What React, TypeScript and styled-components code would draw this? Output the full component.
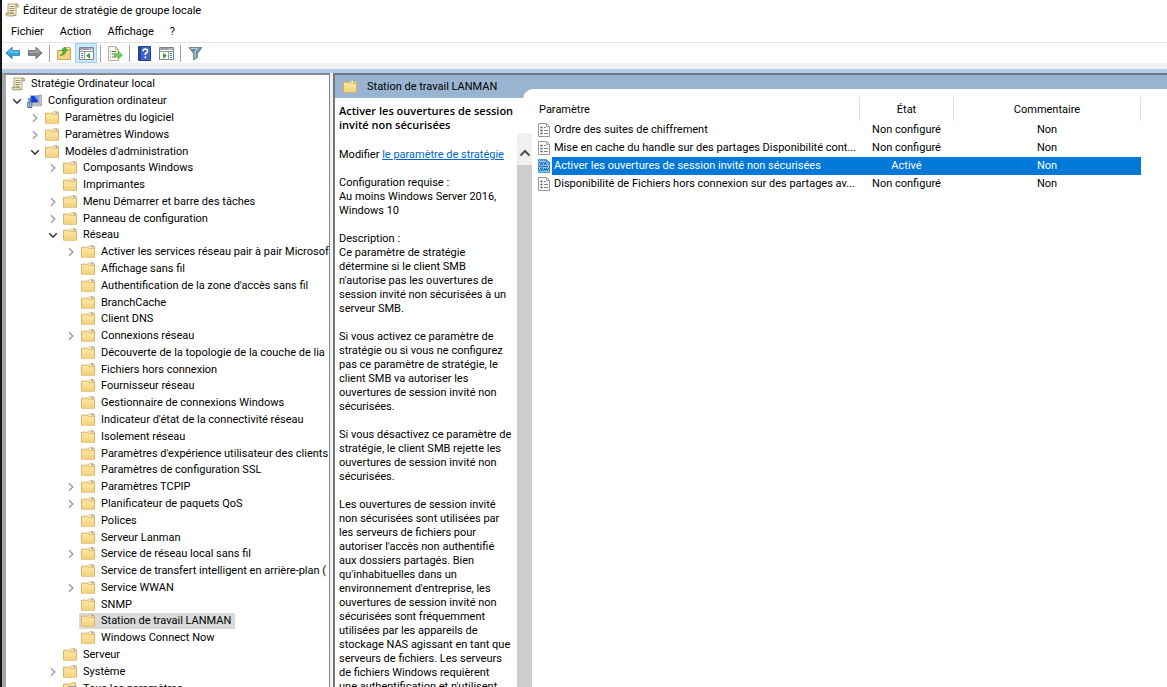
import React from "react";
import styled, { createGlobalStyle, css } from "styled-components";

const Global = createGlobalStyle`
  * { box-sizing: border-box; }
  html, body, #root { height: 100%; }
  body { margin: 0; overflow: hidden; background: #fff; color: #000;
    font-family: Roboto, "Open Sans", sans-serif; font-size: 11px; }
  button { font: inherit; color: inherit; border: 0; background: none; padding: 0; }
  svg { flex: none; }
`;

const Window = styled.div`
  height: 100vh;
  overflow: hidden;
  display: flex;
  flex-direction: column;
  border-left: 2px solid #17171a;
  background: #fff;
`;

const TitleBar = styled.header`
  display: flex;
  align-items: center;
  gap: 4px;
  height: 20px;
  flex: none;
  padding-left: 3px;
`;

const Title = styled.h1`
  margin: 0;
  font-size: 11px;
  font-weight: 400;
`;

const MenuBar = styled.nav`
  display: flex;
  align-items: center;
  gap: 16px;
  height: 22px;
  flex: none;
  padding-left: 9px;
`;

const ToolBar = styled.div`
  display: flex;
  align-items: center;
  height: 21px;
  flex: none;
  border-top: 1px solid #e4e4e4;
`;

const ToolButton = styled.button<{ $active?: boolean }>`
  width: 22px;
  height: 20px;
  display: grid;
  place-items: center;
  ${(p) => p.$active && css`background: #cce8ff; border: 1px solid #99d1ff;`}
`;

const Divider = styled.span`
  width: 1px;
  height: 17px;
  margin: 0 3px;
  background: #a0a0a0;
`;

const Frame = styled.div`
  flex: 1;
  min-height: 0;
  display: flex;
  flex-direction: column;
  border-top: 6px solid #f0f0f0;
`;

const Ribbon = styled.div`
  height: 4px;
  flex: none;
  background: #b4cce8;
`;

const Panes = styled.div`
  flex: 1;
  min-height: 0;
  display: grid;
  grid-template-columns: 328px 1fr;
  column-gap: 3px;
  background: #f0f0f0;
`;

const TreePane = styled.nav`
  min-width: 0;
  overflow: hidden;
  background: #fff;
  border-left: 4px solid #a3a5a9;
  border-right: 1px solid #828790;
  border-top: 2px solid #828790;
  padding-top: 1px;
`;

const Tree = styled.ul`
  list-style: none;
  margin: 0;
  padding: 0;
  min-height: 621px;
  display: grid;
  grid-auto-rows: 1fr;
`;

const Node = styled.li<{ $level: number }>`
  display: flex;
  align-items: center;
  white-space: nowrap;
  line-height: 16px;
  padding-left: ${(p) => [3, 3, 21, 39, 57][p.$level]}px;
`;

const Twisty = styled.span`
  width: 16px;
  height: 14px;
  flex: none;
  display: grid;
  place-items: center;
`;

const NodeLabel = styled.span<{ $selected?: boolean }>`
  display: flex;
  align-items: center;
  gap: 6px;
  padding: 0 4px 0 2px;
  background: ${(p) => (p.$selected ? "#d9d9d9" : "none")};
`;

const ResultPane = styled.main`
  min-width: 0;
  min-height: 0;
  display: flex;
  flex-direction: column;
  background: #99b4d1;
  border-left: 2px solid #74777d;
  border-top: 2px solid #74777d;
`;

const PaneHeader = styled.h2`
  margin: 0;
  height: 23px;
  flex: none;
  display: flex;
  align-items: center;
  gap: 10px;
  padding-left: 8px;
  font-size: 11px;
  font-weight: 400;
`;

const PaneBody = styled.div`
  flex: 1;
  min-height: 0;
  display: grid;
  grid-template-columns: 182px 15px 1fr;
  background: #fff;
`;

const Detail = styled.article`
  overflow: hidden;
  padding: 6px 0 0 4px;
  line-height: 14px;
  p, h3 { margin: 0 0 14px; font-size: 11px; white-space: pre; }
  h3 { margin-bottom: 16px; font-family: "Open Sans", sans-serif; font-weight: 600; }
  a { color: #0066cc; }
`;

const ScrollBar = styled.div`
  position: relative;
  z-index: 1;
  margin-top: 35px;
  display: flex;
  flex-direction: column;
  background: #f0f0f0;
`;

const ScrollUp = styled.button`
  height: 32px;
  flex: none;
  display: grid;
  place-items: center;
  padding-top: 8px;
`;

const Thumb = styled.div`
  flex: 1;
  background: #cdcdcd;
`;

const ListPane = styled.section`
  min-width: 0;
  margin-top: -9px;
  margin-left: -9px;
  padding: 8px 26px 0 15px;
  background: #fff;
  border-top-left-radius: 10px;
`;

const Table = styled.table`
  width: 100%;
  table-layout: fixed;
  border-collapse: collapse;
`;

const Th = styled.th<{ $width?: number; $left?: boolean }>`
  width: ${(p) => (p.$width ? `${p.$width}px` : "auto")};
  height: 24px;
  padding: 1px 0 0 ${(p) => (p.$left ? 1 : 0)}px;
  font-weight: 400;
  text-align: ${(p) => (p.$left ? "left" : "center")};
  border-right: 1px solid #e2e2e2;
`;

const Row = styled.tr<{ $selected?: boolean }>`
  height: 18px;
  color: ${(p) => (p.$selected ? "#fff" : "#000")};
  td { padding: 0; text-align: center; white-space: nowrap; line-height: 16px;
    background: ${(p) => (p.$selected ? "#0078d7" : "none")}; }
  td:first-child { text-align: left; padding-right: 3px;
    background: ${(p) => (p.$selected ? "linear-gradient(to right, #fff 14px, #0078d7 14px)" : "none")}; }
`;

const Setting = styled.span`
  display: flex;
  align-items: center;
  gap: 4px;
`;

const Ellipsis = styled.span`
  min-width: 0;
  overflow: hidden;
  text-overflow: ellipsis;
`;

const FolderIcon = () => (
  <svg width="14" height="14" viewBox="0 0 14 14" aria-hidden="true">
    <path d="M.5 2.200h6.800L8.500.8h4l1 1v10.400H.5z" fill="#fbe09a" stroke="#d8ae5a" strokeWidth=".9" />
    <path d="M8.900 1.200h3.300v1.600H7.800z" fill="#fffaf0" />
    <path d="M10.300 1.200h1.900v1.200h-1.900z" fill="#4c94d8" />
    <path d="M7.500 3.400h5.500" stroke="#dcb464" strokeWidth=".8" />
    <path d="M1 8h12v4H1z" fill="#f4cf7c" opacity=".6" />
  </svg>
);

const ScrollIcon = () => (
  <svg width="14" height="14" viewBox="0 0 14 14" aria-hidden="true">
    <path d="M3 1h9.500v2.500H11v9H1.500V10H3z" fill="#f8f1d4" stroke="#a39a78" strokeWidth=".9" />
    <path d="M1 10.500h8v2.500H2Q1 13 1 10.500z" fill="#e6dbb0" stroke="#9a906c" strokeWidth=".8" />
    <path d="M11 1h1q1.500 0 1.500 1.500V4H11z" fill="#dccf9e" stroke="#9a906c" strokeWidth=".7" />
    <path d="M4.500 3.500h5M4.500 5.500h5M4.500 7.500h5M4.500 9.200h4" stroke="#8d8871" strokeWidth=".9" />
  </svg>
);

const ComputerIcon = () => (
  <svg width="15" height="14" viewBox="0 0 15 14" aria-hidden="true">
    <path d="M3.500 1.500h8v7.500h-8z" fill="#1a3fd0" stroke="#b5bccb" />
    <path d="M7 2h4v5z" fill="#6aa0ff" />
    <path d="M12 1h2.500v10H12z" fill="#c4c9d1" stroke="#7e8590" strokeWidth=".6" />
    <path d="M5 10h9l.5 2H6z" fill="#c9ced6" stroke="#858b94" strokeWidth=".5" />
    <circle cx="2.800" cy="5.500" r="1.700" fill="#5e87ad" />
    <path d="M.8 8h4v5.500h-4z" fill="#dbe7f2" stroke="#3b658c" />
    <path d="M2.800 8v5" stroke="#3b658c" />
  </svg>
);

const AllSettingsIcon = () => (
  <svg width="14" height="14" viewBox="0 0 14 14" aria-hidden="true">
    <path d="M.5 2.200h6.800L8.500.8h4v10.400H.5z" fill="#fbe09a" stroke="#d8ae5a" />
    <path d="M5.500 4.500h8v8h-8z" fill="#f5f5f5" stroke="#9c9c9c" />
    <path d="M7 7h1.500M7 10h1.500M9.500 7H12M9.500 10H12" stroke="#777" />
  </svg>
);

const SettingIcon = ({ selected }: { selected?: boolean }) => (
  <svg width="12" height="14" viewBox="0 0 12 14" aria-hidden="true">
    <path d="M.5.5h8l3 3v10H.5z" fill={selected ? "#8cc0ec" : "#fbfbfb"} stroke={selected ? "#4f9ad8" : "#9a9a9a"} />
    <path d="M8.500.5v3h3" fill="none" stroke={selected ? "#3b8ed2" : "#a5a5a5"} />
    <path d="M2.500 4.500h2M2.500 7.500h2M2.500 10.500h2" stroke={selected ? "#0d4f8e" : "#4b4b55"} strokeWidth="1.600" />
    <path d="M6 4.500h2M6 7.500h4M6 10.500h4" stroke={selected ? "#1a65a8" : "#85858c"} />
    {selected && (
      <path
        d="M0 1.500h9M1 3.500h11M0 5.500h12M1 7.500h11M0 9.500h12M1 11.500h11"
        stroke="#1f7cc8"
        strokeDasharray="1 1"
      />
    )}
  </svg>
);

const Chevron = ({ open }: { open: boolean }) => (
  <svg width="10" height="10" viewBox="0 0 10 10" fill="none" aria-hidden="true">
    {open ? (
      <path d="M1.200 3.200L5 7l3.800-3.800" stroke="#404040" strokeWidth="1.600" />
    ) : (
      <path d="M3 1.200L6.800 5 3 8.800" stroke="#a0a0a0" strokeWidth="1.500" />
    )}
  </svg>
);

const ArrowIcon = ({ forward }: { forward?: boolean }) => (
  <svg width="16" height="14" viewBox="0 0 17 14" aria-hidden="true">
    <path
      d={forward ? "M16 7L9.500 1v3.500H1.500v5h8V13z" : "M1 7l6.500-6v3.500h8v5h-8V13z"}
      fill={forward ? "#8c8c8c" : "#35a5e0"}
      stroke={forward ? "#5f5f5f" : "#1c78b8"}
      strokeWidth=".9"
    />
    <path d={forward ? "M2.500 6h8V3.500L14 6.700" : "M14.500 6h-8V3.500L3 6.700"} fill="none" stroke={forward ? "#b5b5b5" : "#8bd7f7"} />
  </svg>
);

const UpFolderIcon = () => (
  <svg width="14" height="14" viewBox="0 0 14 14" aria-hidden="true">
    <path d="M.5 4.500h6l1.500-2.500h5.500v11.500H.5z" fill="#f3d280" stroke="#c79f48" strokeWidth=".9" />
    <path d="M9 1.500h4V4H8z" fill="#f8e6ac" stroke="#bb923a" strokeWidth=".6" />
    <path d="M3 9.500Q6.500 8.500 6.200 4.500H4.200L7.500 1l3.300 3.500H8.900Q8.600 9.500 3 9.500z" fill="#42b535" stroke="#26811e" strokeWidth=".5" />
  </svg>
);

const WindowIcon = ({ play }: { play?: boolean }) => (
  <svg width="15" height="13" viewBox="0 0 15 13" aria-hidden="true">
    <path d="M.5.5h14v12H.5z" fill="#fff" stroke="#7d858e" />
    <path d="M1 1h13v2H1z" fill="#9aa2ab" />
    <path d="M10 2h1M12 2h1" stroke="#fff" />
    {play ? (
      <>
        <path d="M1 4.500h13M9.500 5v7.500" stroke="#929aa3" />
        <path d="M11 6.500h2M11 8.500h2M11 10.500h2" stroke="#4a79c0" />
        <path d="M4 5.700L8 8.700l-4 3z" fill="#35a82b" />
      </>
    ) : (
      <>
        <path d="M1 4.500h13M5.500 5v7.500" stroke="#929aa3" />
        <path d="M2 6.500h2M2 8.500h2M2 10.500h2" stroke="#5874a0" />
        <path d="M11 5.700L7 8.700l4 3z" fill="#35a82b" />
      </>
    )}
  </svg>
);

const ExportIcon = () => (
  <svg width="16" height="15" viewBox="0 0 16 15" aria-hidden="true">
    <path d="M1.500.5h7l3 3v11h-10z" fill="#fffdf0" stroke="#b5b09a" />
    <path d="M8.500.5v3h3" fill="none" stroke="#b5b09a" />
    <path d="M3 5.500h1M5 5.500h4M3 8h1M5 8h3M3 11h1M5 11h4" stroke="#77735e" />
    <path d="M7.500 7.700H11V5l4.500 4.200L11 13.300v-2.800H7.500z" fill="#6fce59" stroke="#44a334" strokeWidth=".6" />
  </svg>
);

const HelpIcon = () => (
  <svg width="13" height="15" viewBox="0 0 13 15" aria-hidden="true">
    <path d="M.5.5h12v14H.5z" fill="#3d62c8" stroke="#24408f" />
    <path d="M1 1h2v13H1z" fill="#26459e" />
    <path d="M5 5.300Q5 3 7.300 3t2.300 2.100Q9.600 6.500 7.400 7.500V9" fill="none" stroke="#fff" strokeWidth="1.600" />
    <path d="M6.500 10.500h1.800v1.700H6.500z" fill="#fff" />
  </svg>
);

const FilterIcon = () => (
  <svg width="15" height="15" viewBox="0 0 15 15" aria-hidden="true">
    <path d="M1 1.500h13L9.500 7.500v4l-4 2.500V7.500z" fill="#7392aa" stroke="#5c788d" strokeWidth=".8" />
    <path d="M3 2.500h6L7 7v5" fill="none" stroke="#b8cedd" strokeWidth="1.200" />
  </svg>
);

type Item = [level: number, label: string, open?: boolean];

const items: Item[] = [
  [0, "Stratégie Ordinateur local"],
  [1, "Configuration ordinateur", true],
  [2, "Paramètres du logiciel", false],
  [2, "Paramètres Windows", false],
  [2, "Modèles d'administration", true],
  [3, "Composants Windows", false],
  [3, "Imprimantes"],
  [3, "Menu Démarrer et barre des tâches", false],
  [3, "Panneau de configuration", false],
  [3, "Réseau", true],
  [4, "Activer les services réseau pair à pair Microsoft", false],
  [4, "Affichage sans fil"],
  [4, "Authentification de la zone d'accès sans fil"],
  [4, "BranchCache"],
  [4, "Client DNS"],
  [4, "Connexions réseau", false],
  [4, "Découverte de la topologie de la couche de lia"],
  [4, "Fichiers hors connexion"],
  [4, "Fournisseur réseau"],
  [4, "Gestionnaire de connexions Windows"],
  [4, "Indicateur d'état de la connectivité réseau"],
  [4, "Isolement réseau"],
  [4, "Paramètres d'expérience utilisateur des clients"],
  [4, "Paramètres de configuration SSL"],
  [4, "Paramètres TCPIP", false],
  [4, "Planificateur de paquets QoS", false],
  [4, "Polices"],
  [4, "Serveur Lanman"],
  [4, "Service de réseau local sans fil", false],
  [4, "Service de transfert intelligent en arrière-plan ("],
  [4, "Service WWAN", false],
  [4, "SNMP"],
  [4, "Station de travail LANMAN"],
  [4, "Windows Connect Now"],
  [3, "Serveur"],
  [3, "Système", false],
  [3, "Tous les paramètres"],
];

const SELECTED_NODE = "Station de travail LANMAN";

const nodeIcon = (level: number, label: string) => {
  if (level === 0) return <ScrollIcon />;
  if (level === 1) return <ComputerIcon />;
  return label === "Tous les paramètres" ? <AllSettingsIcon /> : <FolderIcon />;
};

const settings = [
  { name: "Ordre des suites de chiffrement", state: "Non configuré" },
  { name: "Mise en cache du handle sur des partages Disponibilité cont...", state: "Non configuré" },
  { name: "Activer les ouvertures de session invité non sécurisées", state: "Activé", selected: true },
  { name: "Disponibilité de Fichiers hors connexion sur des partages av...", state: "Non configuré" },
];

export default function App() {
  return (
    <Window>
      <Global />
      <TitleBar>
        <ScrollIcon />
        <Title>Éditeur de stratégie de groupe locale</Title>
      </TitleBar>
      <MenuBar>
        {["Fichier", "Action", "Affichage", "?"].map((m) => (
          <button key={m}>{m}</button>
        ))}
      </MenuBar>
      <ToolBar>
        <ToolButton aria-label="Précédent"><ArrowIcon /></ToolButton>
        <ToolButton aria-label="Suivant"><ArrowIcon forward /></ToolButton>
        <Divider />
        <ToolButton aria-label="Dossier parent"><UpFolderIcon /></ToolButton>
        <ToolButton aria-label="Arborescence" $active><WindowIcon /></ToolButton>
        <Divider />
        <ToolButton aria-label="Exporter la liste"><ExportIcon /></ToolButton>
        <Divider />
        <ToolButton aria-label="Aide"><HelpIcon /></ToolButton>
        <ToolButton aria-label="Volet Actions"><WindowIcon play /></ToolButton>
        <Divider />
        <ToolButton aria-label="Filtrer"><FilterIcon /></ToolButton>
      </ToolBar>
      <Frame>
        <Ribbon />
        <Panes>
          <TreePane>
            <Tree role="tree">
              {items.map(([level, label, open]) => (
                <Node key={`${level}${label}`} $level={level} role="treeitem" aria-level={level + 1} aria-expanded={open}>
                  {level > 0 && <Twisty>{open !== undefined && <Chevron open={open} />}</Twisty>}
                  <NodeLabel $selected={label === SELECTED_NODE}>
                    {nodeIcon(level, label)}
                    {label}
                  </NodeLabel>
                </Node>
              ))}
            </Tree>
          </TreePane>
          <ResultPane>
            <PaneHeader>
              <FolderIcon />
              Station de travail LANMAN
            </PaneHeader>
            <PaneBody>
              <Detail>
                <h3>{"Activer les ouvertures de session\ninvité non sécurisées"}</h3>
                <p>Modifier <a href="#parametre">le paramètre de stratégie</a></p>
                <p>{"Configuration requise :\nAu moins Windows Server 2016,\nWindows 10"}</p>
                <p>{"Description :\nCe paramètre de stratégie\ndétermine si le client SMB\nn'autorise pas les ouvertures de\nsession invité non sécurisées à un\nserveur SMB."}</p>
                <p>{"Si vous activez ce paramètre de\nstratégie ou si vous ne configurez\npas ce paramètre de stratégie, le\nclient SMB va autoriser les\nouvertures de session invité non\nsécurisées."}</p>
                <p>{"Si vous désactivez ce paramètre de\nstratégie, le client SMB rejette les\nouvertures de session invité non\nsécurisées."}</p>
                <p>{"Les ouvertures de session invité\nnon sécurisées sont utilisées par\nles serveurs de fichiers pour\nautoriser l'accès non authentifié\naux dossiers partagés. Bien\nqu'inhabituelles dans un\nenvironnement d'entreprise, les\nouvertures de session invité non\nsécurisées sont fréquemment\nutilisées par les appareils de\nstockage NAS agissant en tant que\nserveurs de fichiers. Les serveurs\nde fichiers Windows requièrent\nune authentification et n'utilisent"}</p>
              </Detail>
              <ScrollBar>
                <ScrollUp aria-label="Défiler vers le haut">
                  <svg width="12" height="8" viewBox="0 0 12 8" fill="none" aria-hidden="true">
                    <path d="M1.500 6.500L6 2l4.500 4.500" stroke="#505050" strokeWidth="2" />
                  </svg>
                </ScrollUp>
                <Thumb />
              </ScrollBar>
              <ListPane>
                <Table>
                  <thead>
                    <tr>
                      <Th $left>Paramètre</Th>
                      <Th $width={94}>État</Th>
                      <Th $width={187}>Commentaire</Th>
                    </tr>
                  </thead>
                  <tbody>
                    {settings.map((s) => (
                      <Row key={s.name} $selected={s.selected}>
                        <td>
                          <Setting>
                            <SettingIcon selected={s.selected} />
                            <Ellipsis>{s.name}</Ellipsis>
                          </Setting>
                        </td>
                        <td>{s.state}</td>
                        <td>Non</td>
                      </Row>
                    ))}
                  </tbody>
                </Table>
              </ListPane>
            </PaneBody>
          </ResultPane>
        </Panes>
      </Frame>
    </Window>
  );
}
